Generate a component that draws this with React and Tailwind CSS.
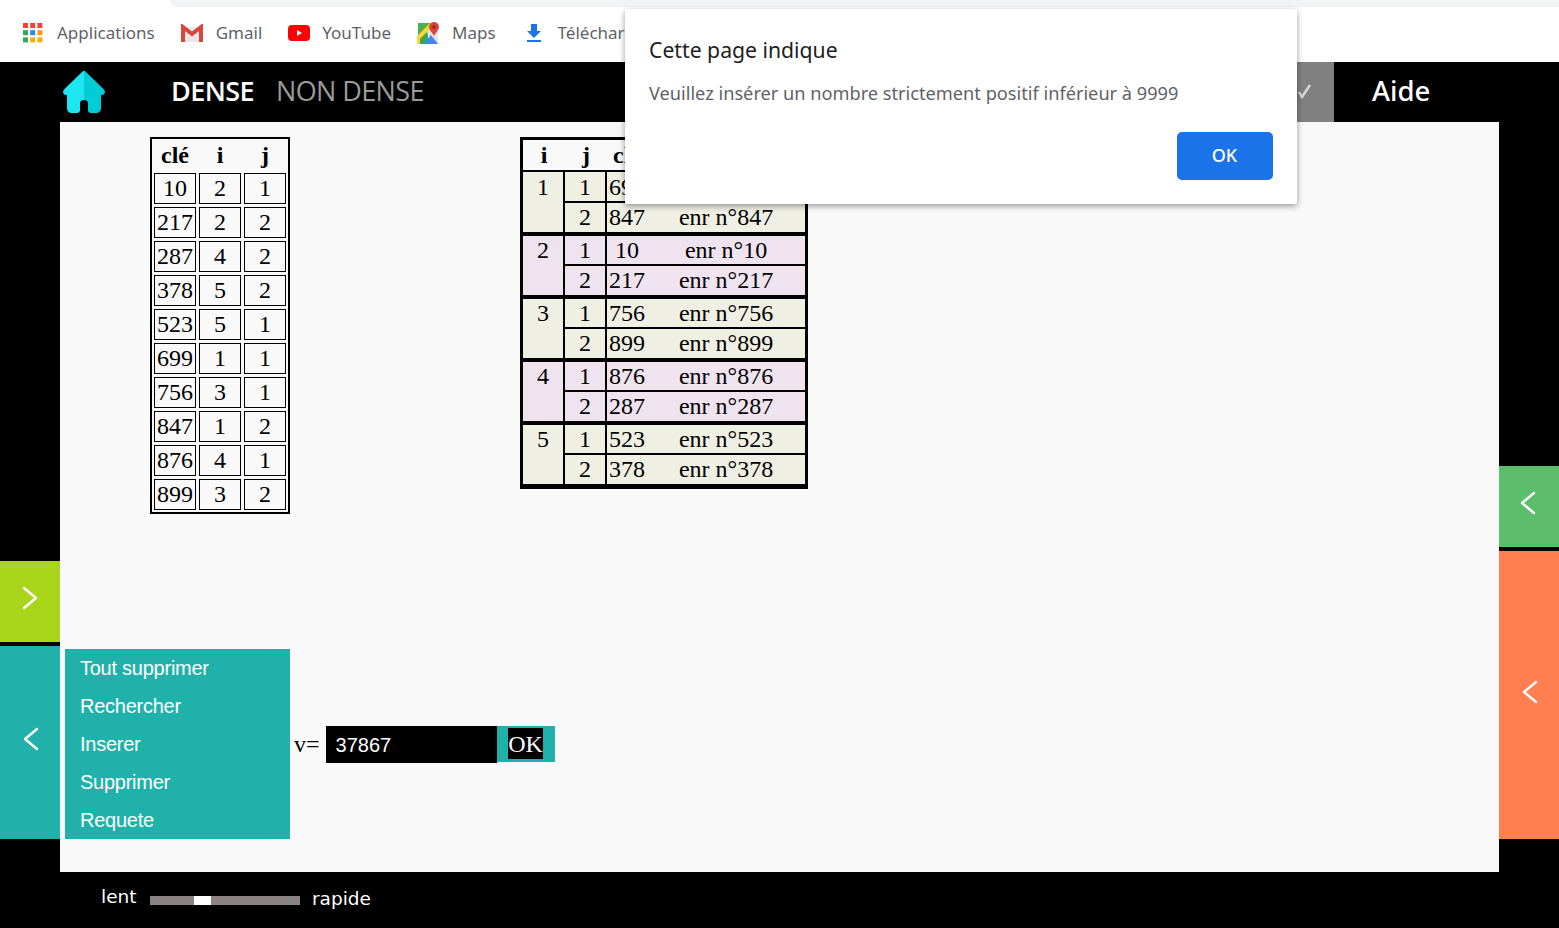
import React from "react";

const serif = "font-['Liberation_Serif',serif]";
const left = [[10,2,1],[217,2,2],[287,4,2],[378,5,2],[523,5,1],[699,1,1],[756,3,1],[847,1,2],[876,4,1],[899,3,2]];
const right = [
  [1, "bg-[#efefe3]", 699, 847],
  [2, "bg-[#efe3ef]", 10, 217],
  [3, "bg-[#efefe3]", 756, 899],
  [4, "bg-[#efe3ef]", 876, 287],
  [5, "bg-[#efefe3]", 523, 378],
];

function Chevron({ dir, className }) {
  return (
    <svg width="16" height="24" viewBox="0 0 16 24" className={className} fill="none" stroke="white" strokeWidth="2.4" strokeLinecap="round" strokeLinejoin="round">
      {dir === "right" ? <path d="M2 2l12 10L2 22" /> : <path d="M14 2L2 12l12 10" />}
    </svg>
  );
}

function Bookmark({ icon, label, className = "" }) {
  return (
    <div className={`flex items-center ${className}`}>
      {icon}
      <span className="text-[17px] text-[#5f6368] font-['Noto_Sans',sans-serif] whitespace-nowrap">{label}</span>
    </div>
  );
}

const AppsIcon = (
  <svg width="22" height="22" viewBox="0 0 22 22" className="mr-[13px]">
    {[["#f44336","#f44336","#f44336"],["#34a853","#2a86f0","#fb9c04"],["#34a853","#fbac04","#fbac04"]].map((row, r) =>
      row.map((c, i) => <rect key={r + "-" + i} x={1 + i * 7.2} y={1 + r * 7.2} width="5" height="5" fill={c} />)
    )}
  </svg>
);
const GmailIcon = (
  <svg width="24" height="18" viewBox="0 0 24 18" className="mr-[12px]">
    <path d="M3 3h18v15H3z" fill="#e8e8e8" />
    <path d="M3 18V3l9 7 9-7v15" fill="none" stroke="#d9473b" strokeWidth="4" />
  </svg>
);
const YtIcon = (
  <svg width="24" height="18" viewBox="0 0 24 18" className="mr-[11px]">
    <rect x="1" y="1" width="22" height="16" rx="4" fill="#ff0000" />
    <path d="M10 6l5 3-5 3z" fill="#fff" />
  </svg>
);
const MapsIcon = (
  <svg width="24" height="24" viewBox="0 0 24 24" className="mr-[11px]">
    <rect x="1" y="2" width="20" height="21" fill="#34a853" />
    <path d="M9 2h12v21H12z" fill="#e4e4e4" />
    <path d="M1 2h14L1 16z" fill="#4caf50" />
    <path d="M1 23v-6L15 3" stroke="#fdd835" strokeWidth="4" fill="none" />
    <path d="M7 23l7-9 7 9z" fill="#4285f4" />
    <path d="M17 1a5 5 0 0 1 5 5c0 3-3 5-5 9-2-4-5-6-5-9a5 5 0 0 1 5-5z" fill="#db4437" />
    <circle cx="17" cy="6" r="1.8" fill="#8f2a21" />
  </svg>
);
const DlIcon = (
  <svg width="22" height="22" viewBox="0 0 22 22" className="mr-[13px]">
    <path d="M8 2h6v7h4l-7 7-7-7h4z" fill="#1a73e8" />
    <rect x="4" y="18" width="14" height="2" fill="#1a73e8" />
  </svg>
);

export default function App() {
  return (
    <div className="relative h-[928px] w-[1559px] overflow-hidden bg-black">
      <div className="relative h-[62px] bg-white">
        <div className="absolute left-[170px] top-0 right-0 h-[7px] rounded-bl-[8px] bg-[#f1f3f4]" />
        <div className="flex h-full items-center pl-[22px] pt-[4px]">
          <Bookmark icon={AppsIcon} label="Applications" className="mr-[25px]" />
          <Bookmark icon={GmailIcon} label="Gmail" className="mr-[25px]" />
          <Bookmark icon={YtIcon} label="YouTube" className="mr-[26px]" />
          <Bookmark icon={MapsIcon} label="Maps" className="mr-[27px]" />
          <Bookmark icon={DlIcon} label="Téléchargements" />
        </div>
      </div>

      <div className="flex h-[60px] items-stretch bg-black">
        <div className="flex w-[171px] items-center pl-[63px]">
          <svg width="42" height="42" viewBox="0 0 42 42">
            <path d="M21 0c-1 0-1.500.5-2 1L1.500 18C-1 20.500 0 24 3 24h1v13c0 3 2 5 5 5h5c2 0 3-1 3-3v-7c0-2 2-3 4-3z" fill="#1ce6f2" />
            <path d="M21 0c1 0 1.500.5 2 1l17.500 17C43 20.500 42 24 39 24h-1v13c0 3-2 5-5 5h-5c-2 0-3-1-3-3v-7c0-2-2-3-4-3z" fill="#00ccd6" />
          </svg>
        </div>
        <div className="flex -translate-y-[1px] items-center gap-[22px] font-['Open_Sans',sans-serif] text-[27px] tracking-[-0.6px]">
          <span className="font-semibold text-white">DENSE</span>
          <span className="text-[#9a9a9a]">NON DENSE</span>
        </div>
        <div className="ml-auto flex">
          <div className="flex w-[44px] items-center justify-end bg-[#808080] pr-[21px]">
            <svg width="18" height="16" viewBox="0 0 18 16" fill="none" stroke="#d8d8d8" strokeWidth="2.4"><path d="M4 8l3 5 8-12" /></svg>
          </div>
          <div className="flex w-[225px] -translate-y-[1px] items-center pl-[38px] font-['Noto_Sans',sans-serif] text-[27.500px] font-medium text-white">Aide</div>
        </div>
      </div>

      <div className="flex h-[750px]">
        <div className="flex w-[60px] flex-col justify-end gap-[4px] pb-[33px]">
          <div className="flex h-[81px] items-center justify-center bg-[#a9d61a]"><Chevron dir="right" className="mb-[7px]" /></div>
          <div className="flex h-[193px] items-center justify-center bg-[#20b2aa]"><Chevron dir="left" className="mb-[7px] ml-[2px]" /></div>
        </div>

        <div className="relative flex-1 bg-[#f9f9f9]">
          <div className={`flex items-start pt-[15px] ${serif} text-black`}>
            <table className="ml-[90px] w-[140px] table-fixed border-separate border-spacing-[3px] p-[1px] text-[24px] leading-[26px] shadow-[inset_0_0_0_2px_#000]">
              <thead>
                <tr><th className="h-[29px] p-0 pb-[2px]">clé</th><th className="p-0 pb-[2px]">i</th><th className="p-0 pb-[2px]">j</th></tr>
              </thead>
              <tbody>
                {left.map((r) => (
                  <tr key={r[0]}>
                    {r.map((v, i) => <td key={i} className="h-[31px] border border-black p-0 pb-[2px] text-center">{v}</td>)}
                  </tr>
                ))}
              </tbody>
            </table>

            <table className="ml-[230px] w-[288px] table-fixed border-separate border-spacing-0 border-x-[3px] border-t-[3px] border-b-[5px] border-black text-[24px] leading-[28px]">
              <colgroup>
                <col className="w-[42px]" /><col className="w-[42px]" /><col className="w-[40px]" /><col />
              </colgroup>
              <thead>
                <tr>
                  <th className="h-[30px] p-0">i</th><th className="p-0">j</th><th className="p-0">clé</th><th className="p-0" />
                </tr>
              </thead>
              {right.map(([n, bg, a, b], g) => {
                const top = g === 0 ? "border-t-[2px] h-[31px] pt-[1px]" : "border-t-[4px] h-[32px]";
                return (
                  <tbody key={n} className={bg}>
                    <tr>
                      <td rowSpan={2} className={`border-r-[2px] border-black p-0 text-center align-top ${top}`}>{n}</td>
                      <td className={`border-r-[2px] border-black p-0 text-center align-top ${top}`}>1</td>
                      <td className={`border-black p-0 text-center align-top ${top}`}>{a}</td>
                      <td className={`border-black p-0 text-center align-top ${top}`}>enr n°{a}</td>
                    </tr>
                    <tr>
                      <td className="h-[31px] border-t-[2px] border-r-[2px] border-black p-0 text-center align-top">2</td>
                      <td className="border-t-[2px] border-black p-0 text-center align-top">{b}</td>
                      <td className="border-t-[2px] border-black p-0 text-center align-top">enr n°{b}</td>
                    </tr>
                  </tbody>
                );
              })}
            </table>
          </div>

          <div className="absolute bottom-[33px] left-[5px] flex items-center">
            <div className="flex h-[190px] w-[225px] flex-col bg-[#20b2aa] pl-[15px] font-['Liberation_Sans',sans-serif] text-[20px] tracking-[-0.25px] text-white">
              {["Tout supprimer", "Rechercher", "Inserer", "Supprimer", "Requete"].map((t) => (
                <div key={t} className="flex h-[38px] items-center">{t}</div>
              ))}
            </div>
            <span className={`ml-[4px] ${serif} text-[24px] text-black`}>v=</span>
            <div className="ml-[6px] flex h-[37px] w-[171px] items-center bg-black pl-[10px] pt-[2px] font-['Liberation_Sans',sans-serif] text-[20px] text-white">37867</div>
            <div className="mb-[1px] flex h-[36px] w-[58px] items-center justify-center bg-[#20b2aa]">
              <span className={`bg-black pt-[1px] text-[24px] leading-[30px] text-white ${serif}`}>OK</span>
            </div>
          </div>
        </div>

        <div className="flex w-[60px] flex-col justify-end gap-[4px] pb-[33px]">
          <div className="flex h-[81px] items-center justify-center bg-[#5cbd6b]"><Chevron dir="left" className="mb-[8px] -ml-[2px]" /></div>
          <div className="flex h-[288px] items-center justify-center bg-[#ff7f50]"><Chevron dir="left" className="mb-[6px] ml-[2px]" /></div>
        </div>
      </div>

      <div className="flex h-[56px] items-center pl-[101px] font-['DejaVu_Sans',sans-serif] text-[18.500px] text-white">
        <span className="w-[49px] -translate-y-[3px]">lent</span>
        <div className="flex h-[9px] w-[150px] bg-[#8c8484]"><div className="ml-[44px] h-full w-[17px] bg-white" /></div>
        <span className="ml-[12px] -translate-y-[1px]">rapide</span>
      </div>

      <div className="absolute left-[625px] top-[9px] flex h-[195px] w-[672px] flex-col rounded-[2px] bg-white px-[24px] pt-[26px] shadow-[0_2px_6px_rgba(0,0,0,0.4)] font-['Noto_Sans',sans-serif]">
        <div className="text-[21.2px] leading-[30px] text-[#202124]">Cette page indique</div>
        <div className="mt-[15px] text-[18.2px] leading-[26px] text-[#5f6368]">Veuillez insérer un nombre strictement positif inférieur à 9999</div>
        <div className="mt-auto mb-[24px] flex justify-end">
          <div className="flex h-[48px] w-[96px] items-center justify-center rounded-[5px] bg-[#1a73e8] pb-[1px] pr-[1px] text-[18px] font-medium text-white">OK</div>
        </div>
      </div>
    </div>
  );
}
